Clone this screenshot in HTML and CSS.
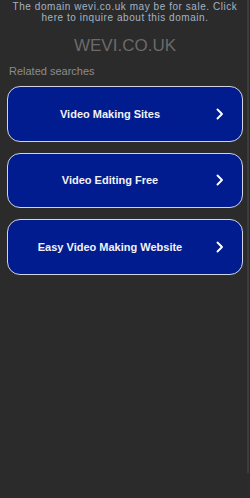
FILE: index.html
```html
<!DOCTYPE html>
<html>
<head>
<meta charset="utf-8">
<link rel="stylesheet" href="styles.css">
</head>
<body>
<div class="page">
  <p class="sale">The domain wevi.co.uk may be for sale. Click here to inquire about this domain.</p>
  <h1 class="domain">WEVI.CO.UK</h1>
  <div class="related">Related searches</div>
  <div class="list">
    <a class="btn"><span class="label">Video Making Sites</span><svg class="chev" width="8" height="12" viewBox="0 0 8 12"><path d="M1.5 1.5 L6 6 L1.5 10.5" fill="none" stroke="#fff" stroke-width="1.9" stroke-linecap="round" stroke-linejoin="round"/></svg></a>
    <a class="btn"><span class="label">Video Editing Free</span><svg class="chev" width="8" height="12" viewBox="0 0 8 12"><path d="M1.5 1.5 L6 6 L1.5 10.5" fill="none" stroke="#fff" stroke-width="1.9" stroke-linecap="round" stroke-linejoin="round"/></svg></a>
    <a class="btn"><span class="label">Easy Video Making Website</span><svg class="chev" width="8" height="12" viewBox="0 0 8 12"><path d="M1.5 1.5 L6 6 L1.5 10.5" fill="none" stroke="#fff" stroke-width="1.9" stroke-linecap="round" stroke-linejoin="round"/></svg></a>
  </div>
  <div class="footer">Copyright © 2025 wevi.co.uk. All rights reserved. | Privacy Policy</div>
</div>
<div class="scrollbar"></div>
</body>
</html>
```
FILE: styles.css
```css
html, body {
  margin: 0;
  padding: 0;
  background: #2b2b2b;
  overflow: hidden;
}
body {
  font-family: "Liberation Sans", Arial, sans-serif;
  height: 498px;
}
.page {
  padding: 0 7px;
}
.sale {
  margin: 0 -7px;
  padding-top: 1px;
  text-align: center;
  color: #a3b4c4;
  font-size: 10px;
  line-height: 11px;
  letter-spacing: 0.55px;
}
.domain {
  margin: 0;
  padding-top: 13px;
  text-align: center;
  color: #6a6a6a;
  font-weight: normal;
  font-size: 17px;
  line-height: 20px;
}
.related {
  margin-top: 9px;
  padding-left: 2px;
  color: #8c8c8c;
  font-size: 11px;
  line-height: 13px;
}
.list {
  margin-top: 8px;
  display: flex;
  flex-direction: column;
  gap: 11px;
}
.btn {
  display: flex;
  align-items: center;
  height: 55.5px;
  box-sizing: border-box;
  border: 1px solid #d0d4e4;
  border-radius: 13px;
  background: #011c8e;
  color: #ffffff;
  padding: 0 18px 0 0;
}
.label {
  flex: 1;
  text-align: center;
  font-weight: bold;
  font-size: 11px;
  color: #f2f2f8;
  margin-right: 4px;
}
.chev {
  display: block;
}
.footer {
  margin-top: 224px;
  text-align: center;
  color: #555555;
  font-size: 9px;
  line-height: 11px;
}
.scrollbar {
  position: fixed;
  top: 0;
  right: 1px;
  width: 2px;
  height: 473px;
  background: #3c3c3c;
}
```
